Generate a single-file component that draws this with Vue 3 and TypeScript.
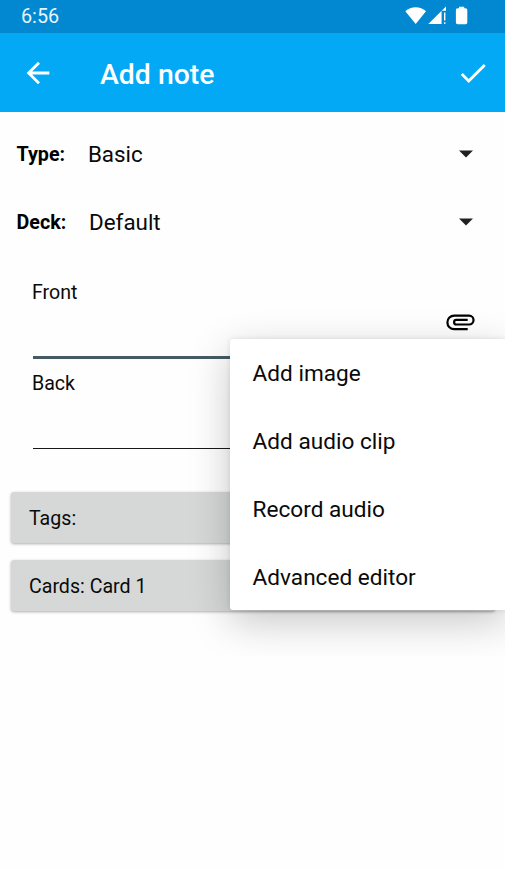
<script setup lang="ts">
interface Selector {
  label: string
  value: string
}

const selectors: Selector[] = [
  { label: 'Type:', value: 'Basic' },
  { label: 'Deck:', value: 'Default' },
]
const menuItems: string[] = ['Add image', 'Add audio clip', 'Record audio', 'Advanced editor']
</script>

<template>
  <div class="screen">
    <header class="status-bar">
      <span class="clock">6:56</span>
      <svg class="status-icons" viewBox="0 0 64 20" aria-hidden="true">
        <path d="M.3 5.3C6-.2 15.3-.2 21 5.3L10.7 18z" />
        <path d="M23.3 18 41 .6v4.2h-4.4V18z" />
        <path d="M39 6.4h1.4v8H39zM39 16.2h1.4V18H39z" />
        <path d="M54 .7h5.2v1.6h1.4q1.7 0 1.7 1.7v12.6q0 1.7-1.7 1.7h-8q-1.7 0-1.7-1.7V4q0-1.7 1.7-1.7H54z" />
      </svg>
    </header>

    <nav class="toolbar">
      <svg class="icon" viewBox="0 0 24 24" aria-hidden="true">
        <path d="M20 11H7.83l5.59-5.59L12 4l-8 8 8 8 1.41-1.41L7.83 13H20v-2z" />
      </svg>
      <h1 class="title">Add note</h1>
      <svg class="icon" viewBox="0 0 24 24" aria-hidden="true">
        <path d="M9 16.2 4.8 12l-1.4 1.4L9 19 21 7l-1.4-1.4z" />
      </svg>
    </nav>

    <main class="content">
      <div v-for="item in selectors" :key="item.label" class="selector">
        <span class="selector-label">{{ item.label }}</span>
        <span class="selector-value">{{ item.value }}</span>
        <svg class="caret" viewBox="0 0 14 8" aria-hidden="true"><path d="M0 .5h14l-7 7z" /></svg>
      </div>

      <section class="field field-front">
        <span class="field-label">Front</span>
        <svg class="icon clip" viewBox="0 0 34 34" aria-hidden="true">
          <path
            d="M24.7 24.2H11.2a6.8 6.8 0 0 1 0-13.6H26.1a4.45 4.45 0 0 1 0 8.9H13.4a2.3 2.3 0 0 1 0-4.6H24.7"
          />
        </svg>
      </section>
      <section class="field field-back">
        <span class="field-label">Back</span>
      </section>

      <div class="actions">
        <button class="action" type="button">Tags:</button>
        <button class="action" type="button">Cards: Card 1</button>
      </div>
    </main>

    <div class="popup">
      <ul class="menu">
        <li v-for="item in menuItems" :key="item" class="menu-item">{{ item }}</li>
      </ul>
    </div>
  </div>
</template>

<style>
body {
  margin: 0;
  background: #fff;
}
</style>

<style scoped>
.screen {
  position: relative;
  box-sizing: border-box;
  width: 505px;
  height: 870px;
  overflow: hidden;
  background: #fefefe;
  color: #0a0a0a;
  font-family: Roboto, sans-serif;
}

.status-bar {
  display: flex;
  align-items: center;
  justify-content: space-between;
  box-sizing: border-box;
  height: 33px;
  padding: 0 36px 1px 21px;
  background: #0288d1;
  color: #e9f5fc;
}

.clock {
  padding-top: 1px;
  font-size: 19.8px;
  line-height: 31px;
}

.status-icons {
  width: 64px;
  height: 20px;
  fill: #fff;
}

.toolbar {
  display: flex;
  align-items: center;
  box-sizing: border-box;
  height: 79px;
  padding: 0 15px 0 21px;
  background: #03a9f4;
  color: #fff;
}

.icon {
  flex: none;
  width: 34px;
  height: 34px;
  fill: currentColor;
}

.title {
  flex: 1;
  margin: 5px 0 0 45px;
  font-size: 28.4px;
  font-weight: 500;
  line-height: 34px;
}

.content {
  display: flex;
  flex-direction: column;
  padding-top: 8px;
}

.selector {
  display: flex;
  align-items: center;
  height: 68px;
  padding: 0 32px 0 16.5px;
}

.selector-label {
  margin-right: 22.8px;
  color: #000;
  font-size: 19.7px;
  font-weight: 700;
}

.selector-value {
  flex: 1;
  font-size: 22.4px;
}

.caret {
  width: 14px;
  height: 8px;
  fill: #202020;
}

.field {
  display: flex;
  align-items: flex-start;
  justify-content: space-between;
  box-sizing: border-box;
  margin: 0 33px;
}

.field-front {
  height: 83px;
  margin-top: 20px;
  border-bottom: 3px solid #455a64;
}

.field-back {
  height: 90px;
  padding-top: 8px;
  border-bottom: 1px solid #181818;
}

.field-label {
  margin-left: -1px;
  font-size: 19.6px;
  line-height: 34px;
}

.clip {
  margin: 28.5px -5px 0 0;
  fill: none;
  stroke: #000;
  stroke-width: 2.2;
}

.actions {
  display: flex;
  flex-direction: column;
  gap: 17px;
  padding: 43px 10px 0 11px;
}

.action {
  height: 51px;
  padding: 1px 18px 0;
  border: 0;
  border-radius: 3px;
  background: #d6d8d7;
  box-shadow: 0 1px 3px rgba(0, 0, 0, 0.32);
  color: #0a0a0a;
  font-family: inherit;
  font-size: 19.6px;
  text-align: left;
}

/* The popup window clips the elevation shadow of the menu. */
.popup {
  position: absolute;
  top: 293px;
  right: 0;
  box-sizing: border-box;
  width: 320px;
  height: 363px;
  padding: 45.6px 0 0 45px;
  overflow: hidden;
}

.menu {
  width: 277px;
  height: 271.6px;
  margin: 0;
  padding: 0;
  border-radius: 3px;
  background: #fff;
  box-shadow: 0 12px 40px rgba(0, 0, 0, 0.22), 0 0 5px rgba(0, 0, 0, 0.1);
  list-style: none;
}

.menu-item {
  height: 68px;
  padding-left: 22.6px;
  font-size: 22.6px;
  line-height: 69.6px;
}
</style>
